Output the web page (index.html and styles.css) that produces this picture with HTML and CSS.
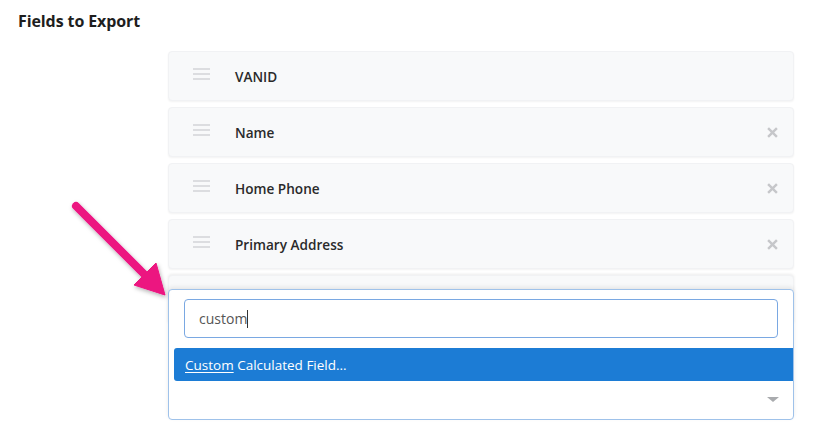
FILE: index.html
```html
<!DOCTYPE html>
<html>
<head>
<meta charset="utf-8">
<link rel="stylesheet" href="styles.css">
</head>
<body>
<div class="page">
  <h2 class="title">Fields to Export</h2>
  <div class="list">
    <div class="row">
      <span class="handle"><i></i><i></i><i></i></span>
      <span class="label">VANID</span>
    </div>
    <div class="row">
      <span class="handle"><i></i><i></i><i></i></span>
      <span class="label">Name</span>
      <svg class="remove" viewBox="0 0 10 10"><path d="M1 1L9 9M9 1L1 9"/></svg>
    </div>
    <div class="row">
      <span class="handle"><i></i><i></i><i></i></span>
      <span class="label">Home Phone</span>
      <svg class="remove" viewBox="0 0 10 10"><path d="M1 1L9 9M9 1L1 9"/></svg>
    </div>
    <div class="row">
      <span class="handle"><i></i><i></i><i></i></span>
      <span class="label">Primary Address</span>
      <svg class="remove" viewBox="0 0 10 10"><path d="M1 1L9 9M9 1L1 9"/></svg>
    </div>
    <div class="row row-new">
      <div class="dropdown">
        <div class="search"><span class="typed">custom</span><span class="caret"></span></div>
        <ul class="results">
          <li class="option active"><u>Custom</u> Calculated Field...</li>
        </ul>
        <div class="selection"><span class="arrow-down"></span></div>
      </div>
    </div>
  </div>
  <svg class="pointer" viewBox="0 0 820 436">
    <defs>
      <filter id="sh" x="-20%" y="-20%" width="140%" height="140%">
        <feDropShadow dx="1" dy="2" stdDeviation="2" flood-color="#000" flood-opacity="0.3"/>
      </filter>
    </defs>
    <g filter="url(#sh)" fill="#ec1380" stroke="#ec1380">
      <line x1="76" y1="206" x2="146" y2="276" stroke-width="8" stroke-linecap="round"/>
      <polygon points="134,285 156,263 165,295" stroke-width="1" stroke-linejoin="round"/>
    </g>
  </svg>
</div>
</body>
</html>
```
FILE: styles.css
```css
* { box-sizing: border-box; }
html, body { margin: 0; padding: 0; background: #fff; }
body { font-family: "Open Sans", "Noto Sans", "Liberation Sans", sans-serif; color: #222; }
.page { position: relative; width: 820px; height: 436px; padding: 10px 26px 0 18px; overflow: hidden; }
.title { margin: 0; font-size: 16px; font-weight: 700; line-height: 23px; color: #1e1e1e; letter-spacing: -0.1px; }
.list { margin: 18px 0 0 150px; display: flex; flex-direction: column; gap: 6px; }
.row {
  position: relative;
  height: 50px;
  display: flex;
  align-items: center;
  background: #f8f9fa;
  border: 1px solid #f1f2f4;
  border-radius: 4px;
  box-shadow: 0 1px 2px rgba(0,0,0,0.05);
  padding-left: 24px;
}
.handle { display: flex; flex-direction: column; gap: 3px; width: 17px; align-self: flex-start; margin-top: 16px; }
.handle i { display: block; height: 2px; background: #dcdde0; }
.label { margin-left: 25px; font-size: 13.6px; font-weight: 600; color: #2a2a2a; }
.remove { position: absolute; right: 15px; top: 50%; width: 11px; height: 11px; margin-top: -5px; fill: none; stroke: #c6c7ca; stroke-width: 2.2; }
.row-new { box-shadow: 0 -1px 3px rgba(0,0,0,0.08); }
.dropdown {
  position: absolute;
  left: -1px; right: -1px; top: 13px;
  height: 131px;
  background: #fff;
  border: 1px solid #9fc2ea;
  border-radius: 4px;
  box-shadow: 0 -2px 4px rgba(0,0,0,0.08);
  display: flex;
  flex-direction: column;
}
.search {
  margin: 9px 15px 0 15px;
  height: 39px;
  border: 1px solid #7aa8e2;
  border-radius: 4px;
  display: flex;
  align-items: center;
  padding-left: 14px;
  font-size: 14px;
  color: #555;
}
.caret { display: inline-block; width: 1px; height: 18px; background: #333; margin-left: 0; }
.results { list-style: none; margin: 10px 0 0 5px; padding: 0; }
.option {
  height: 33px;
  display: flex;
  align-items: center;
  padding-left: 11px;
  font-size: 13.5px;
  color: #fff;
  background: #1c7cd5;
  border-radius: 3px 0 0 3px;
  white-space: pre;
}
.option u { text-underline-offset: 2px; }
.selection { flex: 1; position: relative; }
.arrow-down {
  position: absolute; right: 14px; top: 16px;
  width: 0; height: 0;
  border-left: 6px solid transparent; border-right: 6px solid transparent;
  border-top: 5px solid #a9abae;
}
.pointer { position: absolute; left: 0; top: 0; width: 820px; height: 436px; pointer-events: none; }
```
